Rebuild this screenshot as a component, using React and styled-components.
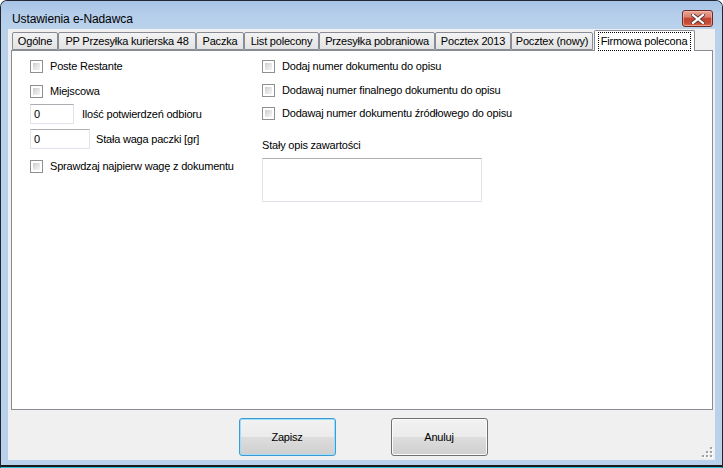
import React from 'react';
import styled, { createGlobalStyle } from 'styled-components';

const Global = createGlobalStyle`
  html, body { margin: 0; padding: 0; background: #ffffff; }
  body { font-family: "Liberation Sans", Arial, sans-serif; font-size: 11px; letter-spacing: -0.2px; color: #000; }
  * { box-sizing: border-box; }
`;

const Window = styled.div`
  position: relative;
  width: 723px;
  height: 468px;
  border: 1px solid #1e2733;
  border-bottom: 1px solid #27c3df;
  border-radius: 7px 7px 0 0;
  background: #b9d1ea;
  display: flex;
  flex-direction: column;
  overflow: hidden;
  box-shadow: inset 0 -2px 0 #1a1a1a;
`;

const TitleBar = styled.div`
  height: 28px;
  flex: none;
  display: flex;
  align-items: flex-start;
  padding-left: 11px;
  background: linear-gradient(#a7c4e5 0%, #b4cdea 45%, #bad2eb 100%);
`;

const Title = styled.div`
  font-family: "Liberation Sans", Arial, sans-serif;
  font-size: 12px;
  letter-spacing: -0.1px;
  line-height: 14px;
  margin-top: 11px;
  color: #000;
`;

const CloseButton = styled.div`
  margin-left: auto;
  margin-right: 9px;
  margin-top: 9px;
  width: 31px;
  height: 17px;
  border: 1px solid #6b2a24;
  border-radius: 3px;
  background: linear-gradient(#e8a796 0%, #d9806e 40%, #c34532 50%, #c54b36 80%, #d86f50 100%);
  box-shadow: inset 0 0 0 1px rgba(255, 200, 190, 0.55);
  display: flex;
  align-items: center;
  justify-content: center;
`;

const Client = styled.div`
  position: relative;
  height: 431px;
  flex: none;
  margin: 0 7px;
  background: #f0f0f0;
  display: flex;
  flex-direction: column;
`;

const TabControl = styled.div`
  margin: 0 2px 0 3px;
  display: flex;
  flex-direction: column;
`;

const TabStrip = styled.div`
  display: flex;
  align-items: flex-end;
  height: 21px;
  padding-left: 1px;
  position: relative;
  z-index: 2;
`;

const Tab = styled.div`
  height: ${p => (p.$active ? 21 : 18)}px;
  width: ${p => p.$w}px;
  margin-bottom: ${p => (p.$active ? -1 : 0)}px;
  margin-left: ${p => (p.$active ? 1 : 0)}px;
  border: 1px solid #898c95;
  border-bottom: ${p => (p.$active ? 'none' : '1px solid #898c95')};
  border-radius: 2px 2px 0 0;
  background: ${p => (p.$active ? '#ffffff' : 'linear-gradient(#f3f3f3 0%, #ebebeb 50%, #e3e3e3 100%)')};
  display: flex;
  align-items: ${p => (p.$active ? 'flex-start' : 'center')};
  justify-content: center;
  white-space: nowrap;
  font-size: 11px;
  line-height: 13px;
  padding-top: ${p => (p.$active ? 1 : 0)}px;
`;

const FocusRect = styled.span`
  border: 1px dotted #000;
  padding: 2px 3px 2px 2px;
`;

const Panel = styled.div`
  height: 360px;
  border: 1px solid #898c95;
  background: #ffffff;
  display: grid;
  grid-template-columns: 232px 1fr;
  align-items: start;
  padding: 9px 0 0 18px;
`;

const Column = styled.div`
  display: flex;
  flex-direction: column;
`;

const Row = styled.label`
  display: flex;
  align-items: center;
  margin-top: ${p => p.$top || 0}px;
  white-space: nowrap;
  line-height: 13px;
`;

const Box = styled.span`
  position: relative;
  flex: none;
  width: 13px;
  height: 13px;
  border: 1px solid #8e8f8f;
  background: #ffffff;
  margin-right: 7px;
  &::after {
    content: '';
    position: absolute;
    inset: 2px;
    background: linear-gradient(135deg, #c9cbce 0%, #e2e3e5 50%, #f6f6f6 100%);
  }
`;

const Input = styled.input`
  width: ${p => p.$w}px;
  height: 20px;
  margin-right: ${p => p.$gap}px;
  border: 1px solid #e2e3ea;
  border-top-color: #abadb3;
  padding: 0 3px;
  font-family: "Liberation Sans", Arial, sans-serif;
  font-size: 11px;
  color: #000;
  background: #fff;
  outline: none;
`;

const FieldLabel = styled.div`
  margin-top: ${p => p.$top}px;
  line-height: 13px;
`;

const TextArea = styled.textarea`
  width: 220px;
  height: 44px;
  margin-top: 6px;
  border: 1px solid #e2e3ea;
  border-top-color: #abadb3;
  resize: none;
  outline: none;
  font-family: "Liberation Sans", Arial, sans-serif;
  font-size: 11px;
`;

const ButtonBar = styled.div`
  display: flex;
  justify-content: center;
  gap: 55px;
  padding-top: 8px;
  padding-left: 3px;
`;

const Button = styled.button`
  width: 97px;
  height: 38px;
  border-radius: 3px;
  border: 1px solid ${p => (p.$default ? '#3c9ad6' : '#707070')};
  box-shadow: ${p => (p.$default ? 'inset 0 0 0 1px #9be0f8' : 'inset 0 0 0 1px #fbfbfb')};
  background: linear-gradient(#f2f2f2 0%, #ebebeb 50%, #dddddd 51%, #cfcfcf 100%);
  font-family: "Liberation Sans", Arial, sans-serif;
  font-size: 11px;
  letter-spacing: -0.2px;
  color: #000;
  padding: 0;
`;

const Grip = styled.svg`
  position: absolute;
  right: 2px;
  bottom: 2px;
`;

const tabs = [
  { label: 'Ogólne', w: 46 },
  { label: 'PP Przesyłka kurierska 48', w: 138 },
  { label: 'Paczka', w: 48 },
  { label: 'List polecony', w: 75 },
  { label: 'Przesyłka pobraniowa', w: 116 },
  { label: 'Pocztex 2013', w: 76 },
  { label: 'Pocztex (nowy)', w: 82 },
  { label: 'Firmowa polecona', w: 101, active: true },
];

const Check = ({ children, top }) => (
  <Row $top={top}>
    <Box />
    {children}
  </Row>
);

export default function App() {
  return (
    <>
      <Global />
      <Window>
        <TitleBar>
          <Title>Ustawienia e-Nadawca</Title>
          <CloseButton>
            <svg width="14" height="10" viewBox="0 0 14 10">
              <path d="M2 1 L12 9 M12 1 L2 9" stroke="#5a3a36" strokeWidth="4" strokeLinecap="square" />
              <path d="M2 1 L12 9 M12 1 L2 9" stroke="#ffffff" strokeWidth="2.2" strokeLinecap="square" />
            </svg>
          </CloseButton>
        </TitleBar>
        <Client>
          <TabControl>
            <TabStrip>
              {tabs.map(t => (
                <Tab key={t.label} $w={t.w} $active={t.active}>
                  {t.active ? <FocusRect>{t.label}</FocusRect> : t.label}
                </Tab>
              ))}
            </TabStrip>
            <Panel>
              <Column>
                <Check>Poste Restante</Check>
                <Check top={12}>Miejscowa</Check>
                <Row $top={6}>
                  <Input $w={44} $gap={8} defaultValue="0" />
                  Ilość potwierdzeń odbioru
                </Row>
                <Row $top={5}>
                  <Input $w={60} $gap={6} defaultValue="0" />
                  Stała waga paczki [gr]
                </Row>
                <Check top={11}>Sprawdzaj najpierw wagę z dokumentu</Check>
              </Column>
              <Column>
                <Check>Dodaj numer dokumentu do opisu</Check>
                <Check top={11}>Dodawaj numer finalnego dokumentu do opisu</Check>
                <Check top={10}>Dodawaj numer dokumentu źródłowego do opisu</Check>
                <FieldLabel $top={19}>Stały opis zawartości</FieldLabel>
                <TextArea />
              </Column>
            </Panel>
          </TabControl>
          <ButtonBar>
            <Button $default>Zapisz</Button>
            <Button>Anuluj</Button>
          </ButtonBar>
          <Grip width="11" height="11" viewBox="0 0 11 11">
            {[[8, 0], [8, 4], [4, 4], [8, 8], [4, 8], [0, 8]].map(([x, y]) => (
              <g key={`${x}-${y}`}>
                <rect x={x + 1} y={y + 1} width="2" height="2" fill="#ffffff" />
                <rect x={x} y={y} width="2" height="2" fill="#a0a0a0" />
              </g>
            ))}
          </Grip>
        </Client>
      </Window>
    </>
  );
}
